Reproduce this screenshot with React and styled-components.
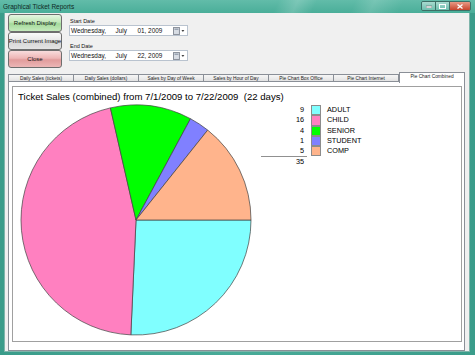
import React from 'react';
import styled, { createGlobalStyle } from 'styled-components';

const GlobalStyle = createGlobalStyle`
  html, body { margin: 0; padding: 0; background: #3c9e8c; }
  body { font-family: "Liberation Sans", Arial, sans-serif; }
`;

const slices = [
  { label: 'ADULT', count: 9, color: '#80ffff' },
  { label: 'CHILD', count: 16, color: '#ff80c0' },
  { label: 'SENIOR', count: 4, color: '#00ff00' },
  { label: 'STUDENT', count: 1, color: '#8080ff' },
  { label: 'COMP', count: 5, color: '#ffb48c' },
];

const tabs = [
  'Daily Sales (tickets)',
  'Daily Sales (dollars)',
  'Sales by Day of Week',
  'Sales by Hour of Day',
  'Pie Chart Box Office',
  'Pie Chart Internet',
  'Pie Chart Combined',
];

function PieChart({ size, data }) {
  const c = size / 2;
  const r = size / 2 - 1;
  const total = data.reduce((s, d) => s + d.count, 0);
  let start = 0;
  return (
    <svg width={size} height={size} viewBox={`0 0 ${size} ${size}`}>
      {data.map((d) => {
        const a0 = start;
        const a1 = start + (d.count / total) * Math.PI * 2;
        start = a1;
        const x0 = c + r * Math.cos(a0);
        const y0 = c + r * Math.sin(a0);
        const x1 = c + r * Math.cos(a1);
        const y1 = c + r * Math.sin(a1);
        const large = a1 - a0 > Math.PI ? 1 : 0;
        return (
          <path
            key={d.label}
            d={`M${c},${c} L${x0},${y0} A${r},${r} 0 ${large} 1 ${x1},${y1} Z`}
            fill={d.color}
            stroke="#404040"
            strokeWidth="0.7"
          />
        );
      })}
    </svg>
  );
}

function CalendarIcon() {
  return (
    <svg width="12" height="8" viewBox="0 0 12 8">
      <rect x="0.5" y="0.5" width="6" height="7" fill="#d8dde4" stroke="#8a909a" />
      <rect x="1.5" y="1.5" width="4" height="1.5" fill="#9aa4b2" />
      <path d="M8.5 3 L11.5 3 L10 5 Z" fill="#404040" />
    </svg>
  );
}

export default function App() {
  const total = slices.reduce((s, d) => s + d.count, 0);
  return (
    <>
      <GlobalStyle />
      <Window>
        <TitleBar>
          <TitleText>Graphical Ticket Reports</TitleText>
          <Captions>
            <CaptionButton>
              <svg width="6" height="3"><rect x="0" y="1" width="6" height="2" fill="#fff" stroke="#555" strokeWidth="0.5" /></svg>
            </CaptionButton>
            <CaptionButton>
              <svg width="7" height="5"><rect x="0.5" y="0.5" width="6" height="4" fill="none" stroke="#fff" /></svg>
            </CaptionButton>
            <CloseCaption>
              <svg width="6" height="5"><path d="M0.5 0.5 L5.5 4.5 M5.5 0.5 L0.5 4.5" stroke="#fff" strokeWidth="1.3" /></svg>
            </CloseCaption>
          </Captions>
        </TitleBar>
        <Client>
          <TopArea>
            <ButtonColumn>
              <ActionButton $tone="green">Refresh Display</ActionButton>
              <ActionButton $tone="gray">Print Current Image</ActionButton>
              <ActionButton $tone="red">Close</ActionButton>
            </ButtonColumn>
            <DateColumn>
              <DateLabel>Start Date</DateLabel>
              <DatePicker>
                <DayPart>Wednesday,</DayPart>
                <MonthPart>July</MonthPart>
                <YearPart>01, 2009</YearPart>
                <CalendarIcon />
              </DatePicker>
              <DateLabel $gap>End Date</DateLabel>
              <DatePicker>
                <DayPart>Wednesday,</DayPart>
                <MonthPart>July</MonthPart>
                <YearPart>22, 2009</YearPart>
                <CalendarIcon />
              </DatePicker>
            </DateColumn>
          </TopArea>
          <TabStrip>
            {tabs.map((t, i) => (
              <Tab key={t} $active={i === tabs.length - 1}>{t}</Tab>
            ))}
          </TabStrip>
          <TabPage>
            <ChartBox>
              <ChartTitle>Ticket Sales (combined) from 7/1/2009 to 7/22/2009  (22 days)</ChartTitle>
              <ChartRow>
                <PieChart size={232} data={slices} />
                <Legend>
                  {slices.map((d) => (
                    <React.Fragment key={d.label}>
                      <LegendCount>{d.count}</LegendCount>
                      <Swatch style={{ background: d.color }} />
                      <LegendLabel>{d.label}</LegendLabel>
                    </React.Fragment>
                  ))}
                  <TotalCount>{total}</TotalCount>
                </Legend>
              </ChartRow>
            </ChartBox>
          </TabPage>
        </Client>
      </Window>
    </>
  );
}

const Window = styled.div`
  width: 475px;
  height: 355px;
  display: flex;
  flex-direction: column;
  background: linear-gradient(90deg, #3a9c8a 0%, #48ab98 50%, #3a9c8a 100%);
  overflow: hidden;
`;

const TitleBar = styled.div`
  height: 13px;
  display: flex;
  align-items: flex-start;
  justify-content: space-between;
  padding: 0 4px 0 3px;
  background:
    linear-gradient(115deg, transparent 0 58%, rgba(255,255,255,0.18) 62%, transparent 66% 74%, rgba(255,255,255,0.15) 78%, transparent 84%),
    linear-gradient(180deg, #62bca9 0%, #4aae99 100%);
`;

const TitleText = styled.div`
  font-size: 6.5px;
  line-height: 13px;
  color: #102a26;
`;

const Captions = styled.div`
  display: flex;
  margin-top: 1px;
  border: 1px solid #3d6f66;
  border-radius: 2px;
  overflow: hidden;
`;

const CaptionButton = styled.div`
  width: 13px;
  height: 8px;
  display: flex;
  align-items: center;
  justify-content: center;
  background: linear-gradient(#a9dacf, #6dbfae);
  border-right: 1px solid #3d6f66;
`;

const CloseCaption = styled(CaptionButton)`
  width: 20px;
  border-right: none;
  background: linear-gradient(#e89a86, #c8452c);
`;

const Client = styled.div`
  flex: 1;
  margin: 0 5px 3px 4px;
  background: #f0f0f0;
  display: flex;
  flex-direction: column;
  padding: 1px 4px 0 3px;
  border: 1px solid #7fb5ab;
  border-top: none;
`;

const TopArea = styled.div`
  display: flex;
  gap: 7px;
  height: 56px;
`;

const ButtonColumn = styled.div`
  display: flex;
  flex-direction: column;
  width: 54px;
`;

const tones = {
  green: 'linear-gradient(#e6f6e2 0%, #bfe7b6 45%, #a3d99a 55%, #c5ebbd 100%)',
  gray: 'linear-gradient(#fafafa 0%, #e8e8e8 45%, #d6d6d6 55%, #e4e4e4 100%)',
  red: 'linear-gradient(#f8dcdc 0%, #eeb6b6 45%, #e19c9c 55%, #ecb6b6 100%)',
};

const ActionButton = styled.div`
  height: 18px;
  box-sizing: border-box;
  display: flex;
  align-items: center;
  justify-content: center;
  font-size: 6px;
  color: #111;
  white-space: nowrap;
  border: 1px solid #6e6e6e;
  border-radius: 3px;
  background: ${(p) => tones[p.$tone]};
`;

const DateColumn = styled.div`
  display: flex;
  flex-direction: column;
  padding-top: 4px;
`;

const DateLabel = styled.div`
  font-size: 5.5px;
  line-height: 7px;
  color: #111;
  margin-top: ${(p) => (p.$gap ? '7px' : '0')};
  padding-left: 1px;
`;

const DatePicker = styled.div`
  width: 119px;
  height: 11px;
  box-sizing: border-box;
  display: flex;
  align-items: center;
  background: #fff;
  border: 1px solid #b9c3cf;
  padding: 0 2px 0 1px;
  font-size: 6.4px;
  color: #111;
`;

const DayPart = styled.span`
  width: 45px;
`;

const MonthPart = styled.span`
  width: 22px;
`;

const YearPart = styled.span`
  width: 36px;
`;

const TabStrip = styled.div`
  display: flex;
  align-items: flex-end;
  height: 12px;
`;

const Tab = styled.div`
  flex: 1;
  height: ${(p) => (p.$active ? '11px' : '8px')};
  box-sizing: border-box;
  display: flex;
  align-items: ${(p) => (p.$active ? 'flex-start' : 'center')};
  justify-content: center;
  padding-top: ${(p) => (p.$active ? '1px' : '0')};
  font-size: 4.8px;
  color: #222;
  white-space: nowrap;
  background: ${(p) => (p.$active ? '#fff' : 'linear-gradient(#f6f6f6, #e2e2e2)')};
  border: 1px solid #8a8f97;
  border-bottom: ${(p) => (p.$active ? 'none' : '1px solid #8a8f97')};
  border-left: ${(p) => (p.$active ? '1px solid #8a8f97' : 'none')};
  margin-bottom: ${(p) => (p.$active ? '-1px' : '0')};
  position: relative;
  &:first-child { border-left: 1px solid #8a8f97; }
`;

const TabPage = styled.div`
  flex: 1;
  background: #fff;
  border: 1px solid #8a8f97;
  border-top: none;
  padding: 4px 2px 8px 3px;
  display: flex;
`;

const ChartBox = styled.div`
  flex: 1;
  border: 1px solid #a0a0a0;
  padding: 4px 0 0 5px;
  display: flex;
  flex-direction: column;
  overflow: hidden;
`;

const ChartTitle = styled.div`
  font-size: 9.6px;
  line-height: 12px;
  color: #000;
  white-space: pre;
`;

const ChartRow = styled.div`
  display: flex;
  align-items: flex-start;
  margin-top: 1px;
  padding-left: 2px;
`;

const Legend = styled.div`
  display: grid;
  grid-template-columns: 44px 10px auto;
  grid-auto-rows: 10.3px;
  column-gap: 6px;
  margin-left: 9px;
  margin-top: 1px;
  font-size: 7.3px;
  color: #000;
`;

const LegendCount = styled.div`
  text-align: right;
  line-height: 10.3px;
  padding-right: 1px;
`;

const Swatch = styled.div`
  width: 10px;
  height: 10.3px;
  box-sizing: border-box;
  border: 1px solid #8c8c8c;
`;

const LegendLabel = styled.div`
  line-height: 10.3px;
`;

const TotalCount = styled.div`
  grid-column: 1;
  text-align: right;
  line-height: 10px;
  border-top: 1px solid #909090;
  margin-right: -2px;
  padding-right: 3px;
`;
